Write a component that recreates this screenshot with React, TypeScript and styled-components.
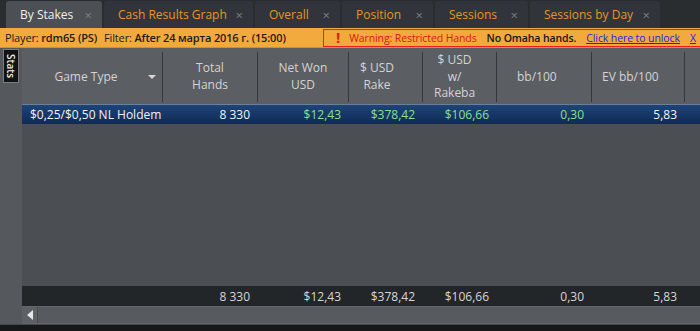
import React from "react";
import styled, { createGlobalStyle } from "styled-components";

const GlobalStyle = createGlobalStyle`
  html, body {
    margin: 0;
    padding: 0;
    background: #2a2d30;
  }
  body {
    font-family: "Open Sans", "Noto Sans", sans-serif;
  }
`;

interface Column {
  title: string[];
  align: "left" | "center";
  indent?: number;
  dropdown?: boolean;
}

const columns: Column[] = [
  { title: ["Game Type"], align: "center", dropdown: true },
  { title: ["Total", "Hands"], align: "center" },
  { title: ["Net Won", "USD"], align: "center" },
  { title: ["$ USD", "Rake"], align: "left", indent: 11 },
  { title: ["$ USD", "w/", "Rakeba"], align: "left", indent: 11 },
  { title: ["bb/100"], align: "left", indent: 20 },
  { title: ["EV bb/100"], align: "left", indent: 10 },
  { title: [""], align: "left" },
];

const tabs = [
  { label: "By Stakes", width: 96 },
  { label: "Cash Results Graph", width: 149 },
  { label: "Overall", width: 85 },
  { label: "Position", width: 91 },
  { label: "Sessions", width: 93 },
  { label: "Sessions by Day", width: 130 },
];

const row = [
  { v: "$0,25/$0,50 NL Holdem", tone: "white", left: true },
  { v: "8 330", tone: "white" },
  { v: "$12,43", tone: "green" },
  { v: "$378,42", tone: "green" },
  { v: "$106,66", tone: "green" },
  { v: "0,30", tone: "green" },
  { v: "5,83", tone: "white" },
  { v: "", tone: "white" },
];

const totals = ["", "8 330", "$12,43", "$378,42", "$106,66", "0,30", "5,83", ""];

const GRID = "141px 95px 91px 74px 74px 95px 93px 1fr";

const App: React.FC = () => {
  return (
    <Page>
      <GlobalStyle />
      <TabBar>
        {tabs.map((t, i) => (
          <Tab key={t.label} active={i === 0} style={{ width: t.width }}>
            <TabLabel active={i === 0}>{t.label}</TabLabel>
            <TabClose>×</TabClose>
          </Tab>
        ))}
      </TabBar>
      <InfoBar>
        <InfoText>
          Player: <b>rdm65 (PS)</b>
        </InfoText>
        <InfoText>
          Filter: <b>After 24 марта 2016 г. (15:00)</b>
        </InfoText>
        <WarningBox>
          <Bang>!</Bang>
          <WarnText>Warning: Restricted Hands</WarnText>
          <NoOmaha>No Omaha hands.</NoOmaha>
          <UnlockLink>Click here to unlock</UnlockLink>
          <UnlockLink>X</UnlockLink>
        </WarningBox>
      </InfoBar>
      <Main>
        <Sidebar>
          <StatsTab>Stats</StatsTab>
        </Sidebar>
        <Grid>
          <HeaderRow>
            {columns.map((c, i) => (
              <HeaderCell
                key={i}
                align={c.align}
                indent={c.indent ?? 0}
                dropdown={c.dropdown}
                last={i === columns.length - 1}
              >
                <HeaderTitle>
                  {c.title.map((l, j) => (
                    <span key={j}>{l}</span>
                  ))}
                </HeaderTitle>
                {c.dropdown && <SortArrow />}
              </HeaderCell>
            ))}
          </HeaderRow>
          <DataRow>
            {row.map((c, i) => (
              <DataCell key={i} tone={c.tone} left={c.left}>
                {c.v}
              </DataCell>
            ))}
          </DataRow>
          <Filler />
          <TotalsRow>
            {totals.map((v, i) => (
              <TotalCell key={i}>{v}</TotalCell>
            ))}
          </TotalsRow>
          <ScrollBar>
            <ScrollButton>
              <svg width="6" height="10" viewBox="0 0 6 10">
                <path d="M6 0 L0 5 L6 10 Z" fill="#e8e8e8" />
              </svg>
            </ScrollButton>
          </ScrollBar>
        </Grid>
      </Main>
      <BottomBar />
    </Page>
  );
};

const Page = styled.div`
  width: 700px;
  height: 331px;
  display: flex;
  flex-direction: column;
  overflow: hidden;
  background: #2a2d30;
`;

const TabBar = styled.div`
  height: 28px;
  display: flex;
  align-items: flex-end;
  padding-left: 6px;
  gap: 2px;
  background: #2a2d30;
`;

const Tab = styled.div<{ active?: boolean }>`
  height: 27px;
  box-sizing: border-box;
  display: flex;
  align-items: center;
  justify-content: space-between;
  padding: 0 10px 0 14px;
  white-space: nowrap;
  border-radius: 3px 3px 0 0;
  background: ${(p) => (p.active ? "#4c4f53" : "#31343a")};
`;

const TabLabel = styled.span<{ active?: boolean }>`
  font-size: 12px;
  color: ${(p) => (p.active ? "#f0f0f0" : "#e5962a")};
`;

const TabClose = styled.span`
  font-size: 13px;
  color: #7c7f84;
`;

const InfoBar = styled.div`
  height: 20px;
  display: flex;
  align-items: center;
  background: #f3aa3c;
  padding-left: 5px;
  box-sizing: border-box;
  border-bottom: 1px solid #d88f22;
`;

const InfoText = styled.span`
  font-size: 11px;
  color: #1d1a14;
  margin-right: 7px;
  white-space: nowrap;
  letter-spacing: -0.15px;
  b {
    font-weight: 600;
  }
`;

const WarningBox = styled.div`
  margin-left: auto;
  width: 377px;
  flex-shrink: 0;
  height: 18px;
  box-sizing: border-box;
  border: 1px solid #e5231b;
  border-right: none;
  display: flex;
  align-items: center;
  padding-left: 12px;
  gap: 10px;
  white-space: nowrap;
  overflow: hidden;
  font-size: 10.5px;
  letter-spacing: -0.1px;
`;

const Bang = styled.span`
  color: #e01a14;
  font-size: 15px;
  font-weight: 700;
  line-height: 1;
`;

const WarnText = styled.span`
  color: #d8161a;
  font-weight: 500;
  margin-left: -1px;
`;

const NoOmaha = styled.span`
  color: #151515;
  font-weight: 600;
`;

const UnlockLink = styled.span`
  color: #1b1ee8;
  text-decoration: underline;
`;

const Main = styled.div`
  flex: 1;
  display: flex;
  min-height: 0;
`;

const Sidebar = styled.div`
  width: 22px;
  background: #55585c;
  padding-top: 1px;
  display: flex;
  justify-content: center;
`;

const StatsTab = styled.div`
  writing-mode: vertical-rl;
  height: 34px;
  width: 16px;
  box-sizing: border-box;
  background: #111214;
  border: 1px solid #7a7d80;
  color: #f0f0f0;
  font-size: 10px;
  font-weight: 600;
  display: flex;
  align-items: center;
  justify-content: center;
`;

const Grid = styled.div`
  flex: 1;
  display: flex;
  flex-direction: column;
  background: #4b4e52;
`;

const HeaderRow = styled.div`
  height: 56px;
  display: grid;
  grid-template-columns: ${GRID};
  padding: 4px 0 4px;
  box-sizing: border-box;
  background: #5b5e62;
`;

const HeaderCell = styled.div<{
  align: "left" | "center";
  indent: number;
  dropdown?: boolean;
  last?: boolean;
}>`
  position: relative;
  display: flex;
  align-items: center;
  justify-content: ${(p) => (p.align === "center" ? "center" : "flex-start")};
  padding-left: ${(p) => p.indent}px;
  padding-right: ${(p) => (p.dropdown ? "12px" : "0")};
  border-right: ${(p) => (p.last ? "none" : "1px solid #35383b")};
  color: #d4d4d4;
  font-size: 12px;
  line-height: 16.5px;
`;

const HeaderTitle = styled.div`
  display: flex;
  flex-direction: column;
  align-items: center;
`;

const SortArrow = styled.span`
  position: absolute;
  right: 6px;
  top: 50%;
  margin-top: -2px;
  width: 0;
  height: 0;
  border-left: 4px solid transparent;
  border-right: 4px solid transparent;
  border-top: 4px solid #d8d8d8;
`;

const DataRow = styled.div`
  height: 20px;
  display: grid;
  grid-template-columns: ${GRID};
  background: linear-gradient(#1d4478, #0f2a55);
  border-top: 1px solid #6d7f9e;
  box-sizing: border-box;
`;

const DataCell = styled.div<{ tone: string; left?: boolean }>`
  display: flex;
  align-items: center;
  justify-content: ${(p) => (p.left ? "flex-start" : "flex-end")};
  padding: ${(p) => (p.left ? "0 0 0 8px" : "0 8px 0 0")};
  font-size: 12px;
  color: ${(p) => (p.tone === "green" ? "#86e08e" : "#f2f2f2")};
  white-space: nowrap;
`;

const Filler = styled.div`
  flex: 1;
  background: #4b4e52;
`;

const TotalsRow = styled.div`
  height: 20px;
  display: grid;
  grid-template-columns: ${GRID};
  background: #232629;
`;

const TotalCell = styled.div`
  display: flex;
  align-items: center;
  justify-content: flex-end;
  padding-right: 8px;
  font-size: 12px;
  color: #d6d6d6;
`;

const ScrollBar = styled.div`
  height: 16px;
  display: flex;
  background: #575a5e;
  border-top: 1px solid #62656a;
  border-bottom: 1px solid #63666a;
`;

const ScrollButton = styled.div`
  width: 15px;
  display: flex;
  align-items: center;
  justify-content: center;
  background: #5d6064;
  border-right: 1px solid #47494d;
`;

const BottomBar = styled.div`
  height: 6px;
  background: #16181a;
  border-top: 1px solid #44474b;
`;

export default App;
